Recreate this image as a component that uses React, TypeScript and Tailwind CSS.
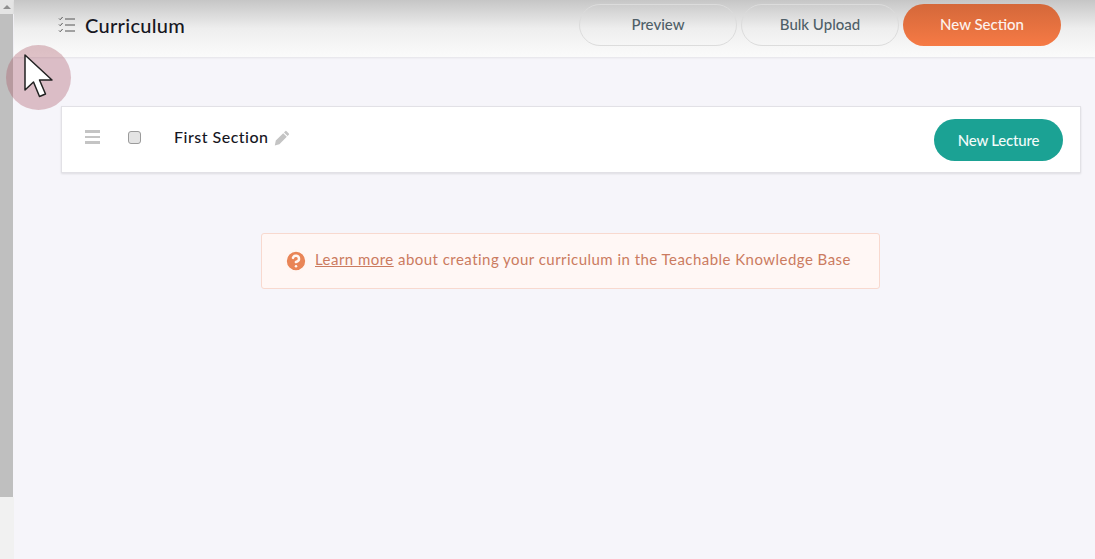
import { CircleHelp } from "lucide-react";

function ChecklistIcon() {
  return (
    <svg width="18" height="17" viewBox="0 0 18 17" fill="none" stroke="#555" strokeWidth="1">
      <path d="M1 2.5l1.2 1.2L4.6 1M1 8.5l1.2 1.2L4.6 7M1 14.5l1.2 1.2L4.6 13" />
      <path d="M7 3h10M7 9h10M7 15h10" />
    </svg>
  );
}

function PencilIcon() {
  return (
    <svg width="16" height="16" viewBox="0 0 16 16" fill="#c4c4c4">
      <path d="M11.2 1.2a1 1 0 0 1 1.4 0l2.2 2.2a1 1 0 0 1 0 1.4l-1.2 1.2L10 2.4zM9.2 3.2l3.6 3.6-7.4 7.4L.8 15.4l1-4.8z" />
    </svg>
  );
}

function ScrollBar() {
  return (
    <div className="flex w-[14px] shrink-0 flex-col">
      <div className="flex h-[14px] items-center justify-center bg-[#e4e4e4]">
        <div className="h-0 w-0 border-x-[4px] border-b-[4px] border-x-transparent border-b-[#8f8f8f]" />
      </div>
      <div className="h-[483px] w-[13px] bg-[#bfbfbf]" />
      <div className="flex-1 bg-[#f1f1f1]" />
    </div>
  );
}

export default function App() {
  return (
    <div className="relative flex h-[559px] w-[1095px] overflow-hidden bg-[#f6f5fa] font-['Lato',sans-serif]">
      <ScrollBar />

      <div className="flex min-w-0 flex-1 flex-col">
        <header className="flex h-[57px] shrink-0 items-center justify-between bg-gradient-to-b from-[#c6c6c6] via-[#eeeeee] to-[#fbfbfb] pr-[34px] pb-[8px] pl-[44px] shadow-[0_1px_2px_rgba(0,0,0,0.08)]">
          <div className="flex items-center gap-[9px]">
            <ChecklistIcon />
            <h1 className="mt-[1px] text-[20px] leading-none font-medium tracking-[0.3px] text-[#17171f]">Curriculum</h1>
          </div>
          <div className="flex items-center gap-[4px]">
            <button className="h-[42px] w-[158px] rounded-full border border-[#dcdcdc] text-[15px] font-medium text-[#4f5f68]">
              Preview
            </button>
            <button className="h-[42px] w-[158px] rounded-full border border-[#dcdcdc] text-[15px] font-medium text-[#4f5f68]">
              Bulk Upload
            </button>
            <button className="h-[42px] w-[158px] rounded-full bg-gradient-to-b from-[#d4683a] to-[#f67a45] text-[15px] font-medium text-[#fdf3ee]">
              New Section
            </button>
          </div>
        </header>

        <main className="flex flex-col pt-[49px] pr-[14px] pl-[47px]">
          <section className="flex h-[67px] items-center justify-between border border-[#e2e1e6] bg-white pr-[17px] pl-[23px] shadow-[0_1px_2px_rgba(0,0,0,0.1)]">
            <div className="-mt-[5px] flex items-center">
              <div className="flex w-[15px] flex-col gap-[3px]">
                <span className="h-[2.5px] bg-[#c4c4c4]" />
                <span className="h-[2.5px] bg-[#c4c4c4]" />
                <span className="h-[2.5px] bg-[#c4c4c4]" />
              </div>
              <div className="ml-[28px] h-[13px] w-[13px] rounded-[3px] border border-[#9b9b9b] bg-[#e4e4e4]" />
              <span className="ml-[33px] text-[16px] font-medium tracking-[0.5px] text-[#17171f]">First Section</span>
              <span className="mt-[2px] ml-[5px]">
                <PencilIcon />
              </span>
            </div>
            <button className="h-[42px] w-[129px] rounded-full bg-[#1ba294] pt-[2px] text-[15px] font-medium tracking-[-0.2px] text-[#f2fbfa]">
              New Lecture
            </button>
          </section>

          <div className="mt-[60px] ml-[200px] flex h-[56px] w-[619px] items-center gap-[9px] rounded-[3px] border border-[#f8d9cf] bg-[#fff7f5] pb-[3px] pl-[24px] text-[15px] tracking-[0.46px] text-[#cb7b60]">
            <span className="mt-[3px] flex h-[20px] w-[20px] items-center justify-center rounded-full bg-[#e98557]">
              <CircleHelp size={20} color="#fff6f3" strokeWidth={2.4} className="scale-125" />
            </span>
            <p>
              <a className="underline">Learn more</a> about creating your curriculum in the Teachable Knowledge Base
            </p>
          </div>
        </main>
      </div>

      {/* screen recorder cursor highlight */}
      <div className="absolute top-[45px] left-[6px] h-[65px] w-[65px] rounded-full bg-[#a85765]/35" />
      <svg className="absolute top-[53px] left-[22px]" width="32" height="48" viewBox="0 0 32 48">
        <path d="M3 2v35l8.5-8 6 14.5 6-2.5-6-14H30z" fill="#fff" stroke="#222" strokeWidth="1.5" strokeLinejoin="round" />
      </svg>
    </div>
  );
}
